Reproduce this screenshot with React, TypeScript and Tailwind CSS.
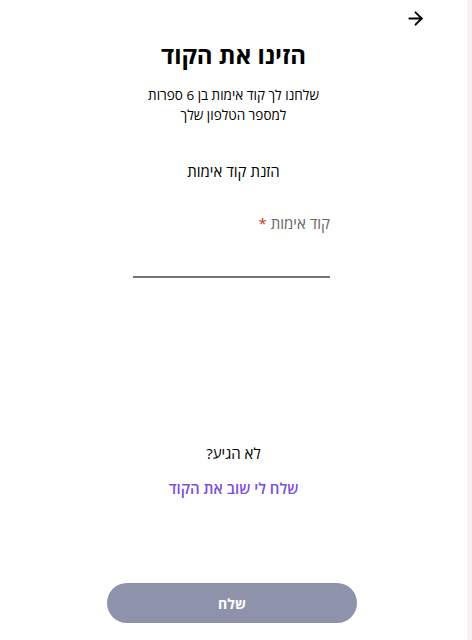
import { ArrowRight } from 'lucide-react';

export default function App() {
  return (
    <div className="flex h-[640px] w-[472px] font-['Open_Sans','Noto_Sans','DejaVu_Sans',sans-serif]">
      <main dir="rtl" className="flex w-[467px] flex-col items-center bg-white">
        <div className="flex w-full justify-start pr-[41px] pt-[8px]">
          <button className="text-black" aria-label="חזרה">
            <ArrowRight size={21} strokeWidth={2.2} />
          </button>
        </div>

        <h1 className="mt-[8px] text-[24px] font-bold leading-[36px] text-black">הזינו את הקוד</h1>
        <p className="mt-[12px] text-center text-[13.5px] leading-[20px] text-black">
          שלחנו לך קוד אימות בן 6 ספרות
          <br />
          למספר הטלפון שלך
        </p>

        <p className="mt-[36px] text-[15px] leading-[20px] text-black">הזנת קוד אימות</p>

        <div className="mr-[4px] mt-[32px] flex w-[197px] flex-col">
          <label className="text-[15px] leading-[20px] text-[#666]">
            קוד אימות <span className="text-[#c0392b]">*</span>
          </label>
          <input
            className="mt-[13px] h-[32px] border-b-2 border-[#757575] bg-transparent text-center text-[16px] outline-none"
            inputMode="numeric"
          />
        </div>

        <p className="mt-[165px] text-[15px] leading-[20px] text-black">לא הגיע?</p>
        <button className="mt-[15px] text-[15px] font-semibold leading-[20px] text-[#7b4fe0]">
          שלח לי שוב את הקוד
        </button>

        <button className="mr-[3px] mt-[85px] h-[40px] w-[250px] rounded-full bg-[#8e93ab] text-[14px] font-bold text-white">
          שלח
        </button>
      </main>
      <div className="w-[5px] bg-[#f7f1f4]" />
    </div>
  );
}
